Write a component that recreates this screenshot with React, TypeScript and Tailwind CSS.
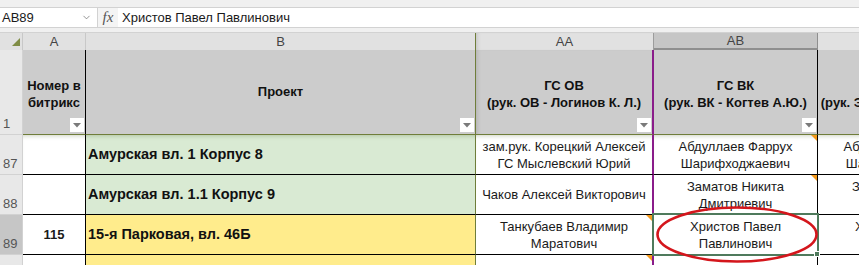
import { ChevronDown } from "lucide-react"

const Drop = () => (
  <div className="absolute bottom-[2px] right-[1px] flex h-[14px] w-[14px] items-center justify-center bg-white">
    <svg width="8" height="5" viewBox="0 0 8 5">
      <path d="M0 0 L8 0 L4 4.5 Z" fill="#7a7a7a" />
    </svg>
  </div>
)

const Note = () => (
  <div className="absolute right-0 top-0 h-0 w-0 border-l-[6px] border-t-[6px] border-l-transparent border-t-[#f39a1e]" />
)

const RowHead = ({ n, sel }: { n: string; sel?: boolean }) => (
  <div
    className={
      "flex items-end border-r border-b border-[#d2d2d2] pb-[1px] pl-[3px] text-[#555] " +
      (sel ? "bg-[#c6c6c6]" : "bg-[#e8e8e8]")
    }
  >
    {n}
  </div>
)

const ColHead = ({ t, cls }: { t: string; cls: string }) => (
  <div className={"flex items-center justify-center bg-[#e1e1e1] text-[#444] " + cls}>{t}</div>
)

const rows = [
  {
    n: "87",
    a: "",
    b: "Амурская вл. 1 Корпус 8",
    bg: "bg-[#d9ead3]",
    aa: ["зам.рук. Корецкий Алексей", "ГС Мыслевский Юрий"],
    ab: ["Абдуллаев Фаррух", "Шарифходжаевич"],
    abNote: true,
    aaNote: false,
  },
  {
    n: "88",
    a: "",
    b: "Амурская вл. 1.1 Корпус 9",
    bg: "bg-[#d9ead3]",
    aa: ["Чаков Алексей Викторович"],
    ab: ["Заматов Никита", "Дмитриевич"],
    abNote: true,
    aaNote: false,
  },
  {
    n: "89",
    a: "115",
    b: "15-я Парковая, вл. 46Б",
    bg: "bg-[#ffec8c]",
    aa: ["Танкубаев Владимир", "Маратович"],
    ab: ["Христов Павел", "Павлинович"],
    abNote: false,
    aaNote: true,
    sel: true,
  },
  {
    n: "90",
    a: "",
    b: "",
    bg: "bg-[#ffec8c]",
    aa: [""],
    ab: [""],
    abNote: false,
    aaNote: true,
  },
]

export default function App() {
  return (
    <div className="relative h-[265px] w-[859px] overflow-hidden bg-[#f0f0f0] font-['Liberation_Sans',Arial,sans-serif] text-[13px] text-[#1a1a1a]">
      <div className="h-[7px]" />
      <div className="flex h-[21px] items-stretch border-y border-[#d2d2d2] bg-white">
        <div className="flex w-[97px] items-center justify-between pl-[2px] pr-[5px]">
          <span>AB89</span>
          <ChevronDown size={11} strokeWidth={1.5} color="#666" />
        </div>
        <div className="flex w-[21px] items-center justify-center border-l border-[#d2d2d2] bg-[#f4f4f4] font-['Liberation_Serif',serif] text-[15px] italic text-[#555]">
          fx
        </div>
        <div className="flex items-center pl-[4px]">Христов Павел Павлинович</div>
      </div>
      <div className="h-[4px]" />

      <div className="grid w-max grid-cols-[23px_63px_390px_178px_164px_166px] grid-rows-[17px_85px_40px_40px_40px_40px] border-t border-[#d2d2d2]">
        {/* column letters */}
        <div className="relative border-r border-[#c8c8c8] bg-[#e1e1e1]">
          <svg className="absolute left-[12px] top-[5px]" width="8" height="8" viewBox="0 0 8 8">
            <path d="M8 0 L8 8 L0 8 Z" fill="#7f8c45" />
          </svg>
        </div>
        <ColHead t="A" cls="border-r border-[#c8c8c8]" />
        <ColHead t="B" cls="border-r border-[#6f7d3a]" />
        <ColHead t="AA" cls="border-r border-[#9c9c9c] shadow-[inset_4px_0_4px_-3px_rgba(0,0,0,0.15)]" />
        <div className="flex items-center justify-center border-r border-b-2 border-[#8f8f8f] bg-[#c6c6c6] text-[#444]">AB</div>
        <ColHead t="AC" cls="border-r border-[#c8c8c8]" />

        {/* header row */}
        <RowHead n="1" />
        <div className="relative flex items-center justify-center border-r border-b border-r-black border-b-[#6f7d3a] bg-[#cccccc] pt-[3px] text-center font-bold leading-[17px] text-[#111]">
          <span>Номер в<br />битрикс</span>
          <Drop />
        </div>
        <div className="relative flex items-center justify-center border-r border-b border-[#6f7d3a] bg-[#cccccc] font-bold text-[#111]">
          Проект
          <Drop />
        </div>
        <div className="relative flex items-center justify-center border-r-2 border-b border-r-[#8a1c8a] border-b-[#6f7d3a] bg-[#cccccc] pt-[3px] text-center font-bold leading-[17px] text-[#111] shadow-[inset_4px_0_4px_-3px_rgba(0,0,0,0.15)]">
          <span>ГС ОВ<br />(рук. ОВ - Логинов К. Л.)</span>
          <Drop />
        </div>
        <div className="relative flex items-center justify-center border-r border-b border-r-black border-b-[#6f7d3a] bg-[#cccccc] pt-[3px] text-center font-bold leading-[17px] text-[#111]">
          <span>ГС ВК<br />(рук. ВК - Когтев А.Ю.)</span>
          <Drop />
        </div>
        <div className="relative flex items-center justify-center overflow-hidden whitespace-nowrap border-r border-b border-r-black border-b-[#6f7d3a] bg-[#cccccc] pt-[3px] text-center font-bold leading-[17px] text-[#111]">
          <span>ГС ЭОМ<br />(рук. ЭОМ - Фролов В.А.)</span>
        </div>

        {rows.map((r) => (
          <Row key={r.n} r={r} />
        ))}
      </div>

      {/* selected cell */}
      <div className="absolute left-[652px] top-[213px] h-[43px] w-[167px] border-2 border-[#4f7a5c]" />
      <div className="absolute left-[814px] top-[251px] h-[6px] w-[6px] border border-white bg-[#4f7a5c]" />
      <svg className="pointer-events-none absolute left-[650px] top-[200px]" width="180" height="70" viewBox="0 0 180 70">
        <ellipse cx="87" cy="34.5" rx="79.5" ry="27" fill="none" stroke="#d4161c" strokeWidth="2.6" />
      </svg>
    </div>
  )
}

const Row = ({ r }: { r: (typeof rows)[number] }) => {
  const top = r.n === "87" ? " shadow-[inset_0_4px_4px_-3px_rgba(60,80,20,0.25)]" : ""
  return (
    <>
      <RowHead n={r.n} sel={r.sel} />
      <div className={"flex items-center justify-center border-r border-b border-black bg-white font-bold" + top}>{r.a}</div>
      <div className={"flex items-center whitespace-nowrap border-r border-b border-r-[#6f7d3a] border-b-black pl-[2px] text-[14.5px] font-bold text-[#111] " + r.bg + top}>
        {r.b}
      </div>
      <div className={"relative flex flex-col items-center justify-center border-r-2 border-b border-r-[#8a1c8a] border-b-black bg-white leading-[17px] whitespace-nowrap" + top}>
        {r.aa.map((t, i) => (
          <span key={i}>{t}</span>
        ))}
        {r.aaNote && <Note />}
      </div>
      <div className={"relative flex flex-col items-center justify-center border-r border-b border-black bg-white leading-[17px] whitespace-nowrap" + top}>
        {r.ab.map((t, i) => (
          <span key={i}>{t}</span>
        ))}
        {r.abNote && <Note />}
      </div>
      <div className={"flex flex-col items-center justify-center border-r border-b border-black bg-white leading-[17px] whitespace-nowrap" + top}>
        {r.ab.map((t, i) => (
          <span key={i}>{t}</span>
        ))}
      </div>
    </>
  )
}
